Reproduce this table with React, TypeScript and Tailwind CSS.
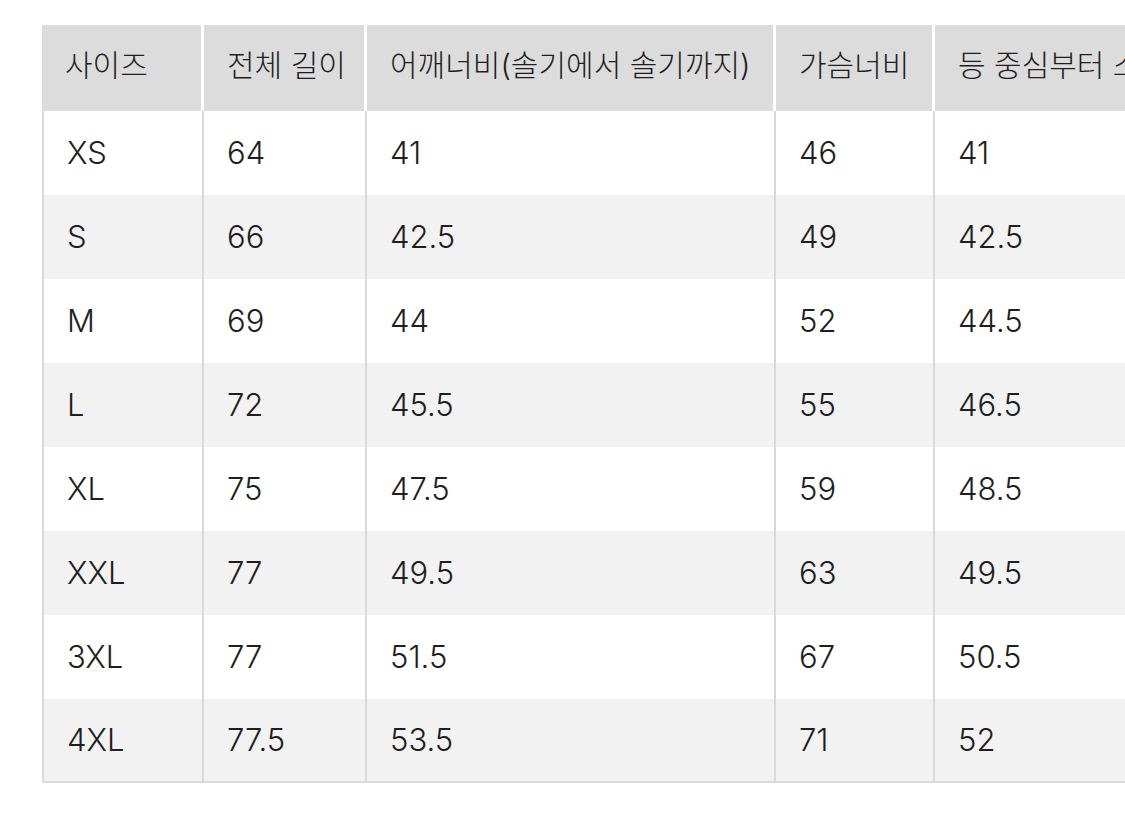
const headers = ['사이즈', '전체 길이', '어깨너비(솔기에서 솔기까지)', '가슴너비', '등 중심부터 소매 길이'];

const rows = [
  ['XS', '64', '41', '46', '41'],
  ['S', '66', '42.5', '49', '42.5'],
  ['M', '69', '44', '52', '44.5'],
  ['L', '72', '45.5', '55', '46.5'],
  ['XL', '75', '47.5', '59', '48.5'],
  ['XXL', '77', '49.5', '63', '49.5'],
  ['3XL', '77', '51.5', '67', '50.5'],
  ['4XL', '77.5', '53.5', '71', '52'],
];

const widths = ['w-[162px]', 'w-[163px]', 'w-[409px]', 'w-[159px]', 'w-[400px]'];

export default function App() {
  return (
    <div
      className="w-[1125px] h-[826px] bg-white overflow-hidden pt-[25px] pl-[42px] text-[#1e1e1e] font-light"
      style={{ fontFamily: 'Inter, "Noto Sans CJK KR", sans-serif' }}
    >
      <table className="table-fixed border-separate border-spacing-0 w-[1293px]">
        <thead>
          <tr className="h-[86px]">
            {headers.map((h, i) => (
              <th
                key={h}
                className={`${widths[i]} bg-[#dcdcdc] border-r-[3px] border-white text-left text-[30px] font-light pl-[23px] pb-[5px] whitespace-nowrap overflow-hidden`}
              >
                {h}
              </th>
            ))}
          </tr>
        </thead>
        <tbody>
          {rows.map((r, ri) => (
            <tr key={r[0]} className={`h-[84px] text-[31px] ${ri % 2 === 1 ? 'bg-[#f2f2f2]' : 'bg-white'}`}>
              {r.map((c, ci) => (
                <td
                  key={ci}
                  className={`border-r-2 border-[#d9d9d9] pl-[23px] ${ci === 0 ? 'border-l-2' : ''} ${ri === rows.length - 1 ? 'border-b-2' : ''}`}
                >
                  {c}
                </td>
              ))}
            </tr>
          ))}
        </tbody>
      </table>
    </div>
  );
}
